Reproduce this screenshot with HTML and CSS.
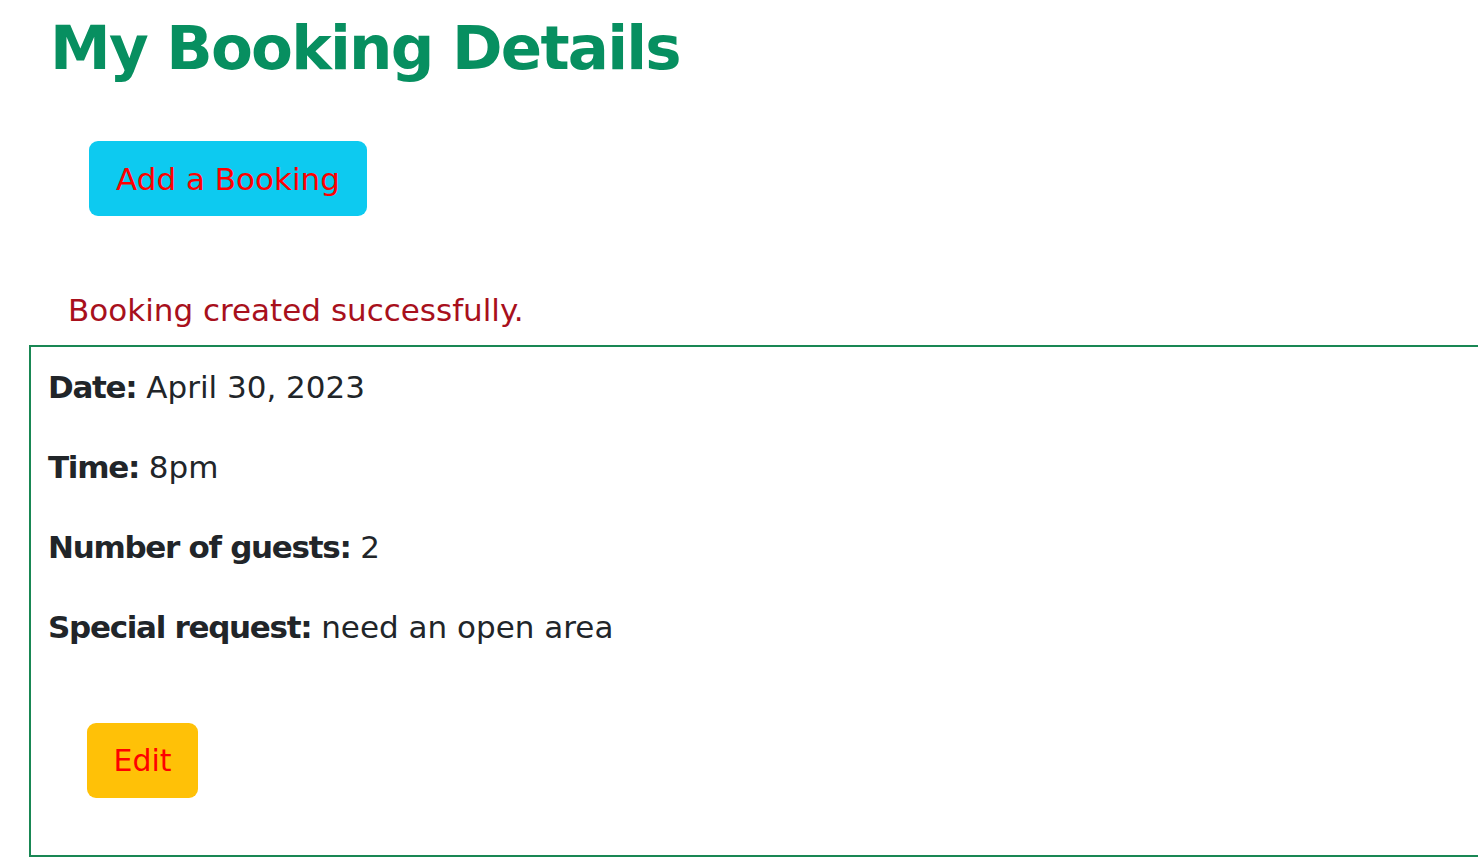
FILE: index.html
```html
<!DOCTYPE html>
<html lang="en">
<head>
<meta charset="utf-8">
<title>My Booking Details</title>
<link rel="stylesheet" href="styles.css">
</head>
<body>
<main class="page">
  <h1 class="title">My Booking Details</h1>
  <div class="actions">
    <a class="btn btn-add" href="#">Add a Booking</a>
  </div>
  <p class="message">Booking created successfully.</p>
  <section class="booking">
    <p class="row"><strong>Date:</strong> April 30, 2023</p>
    <p class="row"><strong>Time:</strong> 8pm</p>
    <p class="row"><strong>Number of guests:</strong> 2</p>
    <p class="row"><strong>Special request:</strong> need an open area</p>
    <div class="edit-wrap">
      <a class="btn btn-edit" href="#">Edit</a>
    </div>
  </section>
</main>
</body>
</html>
```

FILE: styles.css
```css
html, body {
  margin: 0;
  padding: 0;
  background: #fff;
  overflow: hidden;
}
body {
  font-family: "DejaVu Sans", Verdana, sans-serif;
  color: #212529;
}
.page {
  padding-left: 29px;
}
.title {
  margin: 0;
  padding: 8px 0 0 21px;
  font-size: 61px;
  line-height: 80px;
  font-weight: bold;
  letter-spacing: -1.8px;
  color: #078f60;
}
.actions {
  padding: 53px 0 0 60px;
}
.btn {
  display: inline-flex;
  align-items: center;
  justify-content: center;
  height: 75px;
  box-sizing: border-box;
  border-radius: 9px;
  color: #ff0000;
  text-decoration: none;
  font-size: 31px;
}
.btn-add {
  width: 278px;
  background: #0dcaf0;
}
.btn-edit {
  width: 111px;
  font-size: 30px;
  background: #ffc107;
}
.message {
  margin: 0;
  padding: 76px 0 0 39px;
  font-size: 31px;
  line-height: 36px;
  color: #a8101c;
}
.booking {
  margin-top: 17px;
  border: 2px solid #198754;
  border-right: none;
  padding: 20px 0 57px 17px;
}
.row {
  margin: 0 0 40px;
  font-size: 31px;
  line-height: 40px;
}
.row strong {
  font-weight: bold;
  letter-spacing: -1.3px;
}
.edit-wrap {
  padding: 36px 0 0 39px;
}
```
